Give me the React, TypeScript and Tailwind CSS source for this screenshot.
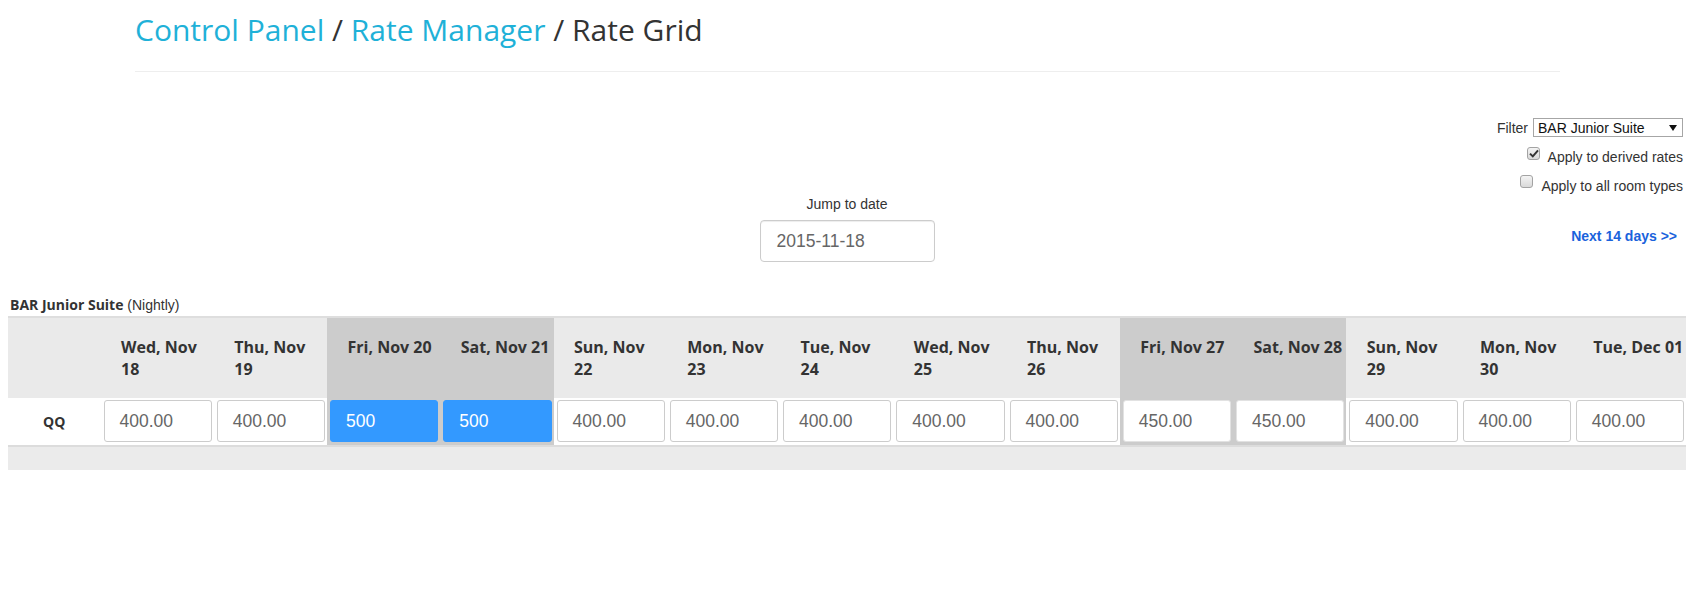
import React from "react";

const days: { label: string; value: string; weekend?: boolean; selected?: boolean }[] = [
  { label: "Wed, Nov 18", value: "400.00" },
  { label: "Thu, Nov 19", value: "400.00" },
  { label: "Fri, Nov 20", value: "500", weekend: true, selected: true },
  { label: "Sat, Nov 21", value: "500", weekend: true, selected: true },
  { label: "Sun, Nov 22", value: "400.00" },
  { label: "Mon, Nov 23", value: "400.00" },
  { label: "Tue, Nov 24", value: "400.00" },
  { label: "Wed, Nov 25", value: "400.00" },
  { label: "Thu, Nov 26", value: "400.00" },
  { label: "Fri, Nov 27", value: "450.00", weekend: true },
  { label: "Sat, Nov 28", value: "450.00", weekend: true },
  { label: "Sun, Nov 29", value: "400.00" },
  { label: "Mon, Nov 30", value: "400.00" },
  { label: "Tue, Dec 01", value: "400.00" },
];

function Checkbox({ checked }: { checked?: boolean }) {
  return (
    <span className="relative flex h-[13px] w-[13px] shrink-0 items-center justify-center rounded-[3px] border border-[#a3a3a3] bg-gradient-to-b from-[#f4f4f4] to-[#d9d9d9]">
      {checked && (
        <svg width="10" height="9" viewBox="0 0 10 9" className="absolute left-[1px] top-[1px]">
          <path d="M1 4.6 L3.8 7.4 L9 1.4" fill="none" stroke="#333" strokeWidth="2" />
        </svg>
      )}
    </span>
  );
}

export default function App() {
  return (
    <div className="min-h-[602px] w-full bg-white font-['Liberation_Sans',Arial,sans-serif] text-[#333]">
      <div className="ml-[135px] w-[1425px]">
        <h1 className="pt-[9px] font-['Open_Sans',sans-serif] text-[30px] font-normal leading-[41px] text-[#333]">
          <span className="text-[#1fb1d8]">Control Panel</span> / <span className="text-[#1fb1d8]">Rate Manager</span> / Rate Grid
        </h1>
        <div className="mt-[21px] h-px bg-[#eeeeee]" />
      </div>

      <div className="pl-[8px] pr-[17px]">
        <div className="mt-[46px] grid grid-cols-[1fr_auto_1fr] items-start">
          <div />
          <div className="mt-[76px] flex flex-col items-center">
            <div className="text-[14px] leading-[20px] text-[#333]">Jump to date</div>
            <div className="mt-[6px] flex h-[42px] w-[175px] items-center rounded-[4px] border border-[#cccccc] bg-white pl-[16px] text-[17.5px] text-[#666] shadow-[inset_0_1px_1px_rgba(0,0,0,0.075)]">
              2015-11-18
            </div>
          </div>
          <div className="flex flex-col items-end justify-self-end pr-[3px] text-[14px]">
            <div className="flex h-[19px] items-center gap-[5px]">
              <span className="leading-[16px]">Filter</span>
              <div className="relative flex h-[19px] w-[150px] items-center border border-[#a6a6a6] bg-white pl-[4px] text-[14px] leading-[16px] text-[#111]">
                BAR Junior Suite
                <svg width="8" height="6" viewBox="0 0 8 6" className="absolute right-[5px] top-[6px]">
                  <path d="M0 0 H8 L4 6 Z" fill="#111" />
                </svg>
              </div>
            </div>
            <div className="mt-[10px] flex h-[20px] items-start gap-[8px]">
              <Checkbox checked />
              <span className="leading-[20px]">Apply to derived rates</span>
            </div>
            <div className="mt-[9px] flex h-[20px] items-start gap-[8px]">
              <span className="-mt-[1px]">
                <Checkbox />
              </span>
              <span className="leading-[20px]">Apply to all room types</span>
            </div>
            <a className="mt-[30px] pr-[6px] text-[14px] font-bold leading-[20px] text-[#1a62dc]">Next 14 days &gt;&gt;</a>
          </div>
        </div>

        <div className="mt-[33px] pl-[2px] text-[14px] leading-[20px]">
          <span className="font-['Open_Sans',sans-serif] text-[14px] font-bold text-[#333]">BAR Junior Suite</span>{" "}
          <span className="text-[#333]">(Nightly)</span>
        </div>

        <div className="mt-[1px] border-t-2 border-[#dedede]">
          <div className="grid grid-cols-[92.5px_repeat(14,minmax(0,1fr))]">
            <div className="h-[80px] bg-[#eaeaea]" />
            {days.map((d) => (
              <div
                key={d.label}
                className={`h-[80px] pl-[20.5px] pr-[2px] pt-[18px] font-['Open_Sans',sans-serif] text-[16px] font-bold leading-[22px] text-[#333] ${
                  d.weekend ? "bg-[#cccccc]" : "bg-[#eaeaea]"
                }`}
              >
                {d.label}
              </div>
            ))}

            <div className="flex h-[47px] items-center justify-center bg-white font-['Open_Sans',sans-serif] text-[14px] font-bold text-[#333]">
              QQ
            </div>
            {days.map((d) => (
              <div
                key={d.label + "-v"}
                className={`h-[47px] pb-[3px] pl-[3px] pr-[2px] pt-[2px] ${d.weekend ? "bg-[#cccccc]" : "bg-white"}`}
              >
                <div
                  className={`flex h-[42px] items-center rounded-[3px] border pl-[15px] text-[17.5px] ${
                    d.selected
                      ? "border-[#3399ff] bg-[#3399ff] text-white"
                      : d.weekend
                      ? "border-[#e2e2e2] bg-white text-[#666]"
                      : "border-[#cccccc] bg-white text-[#666]"
                  }`}
                >
                  {d.value}
                </div>
              </div>
            ))}
          </div>
          <div className="h-[25px] border-t-2 border-[#dcdcdc] bg-[#ebebeb]" />
        </div>
      </div>
    </div>
  );
}
